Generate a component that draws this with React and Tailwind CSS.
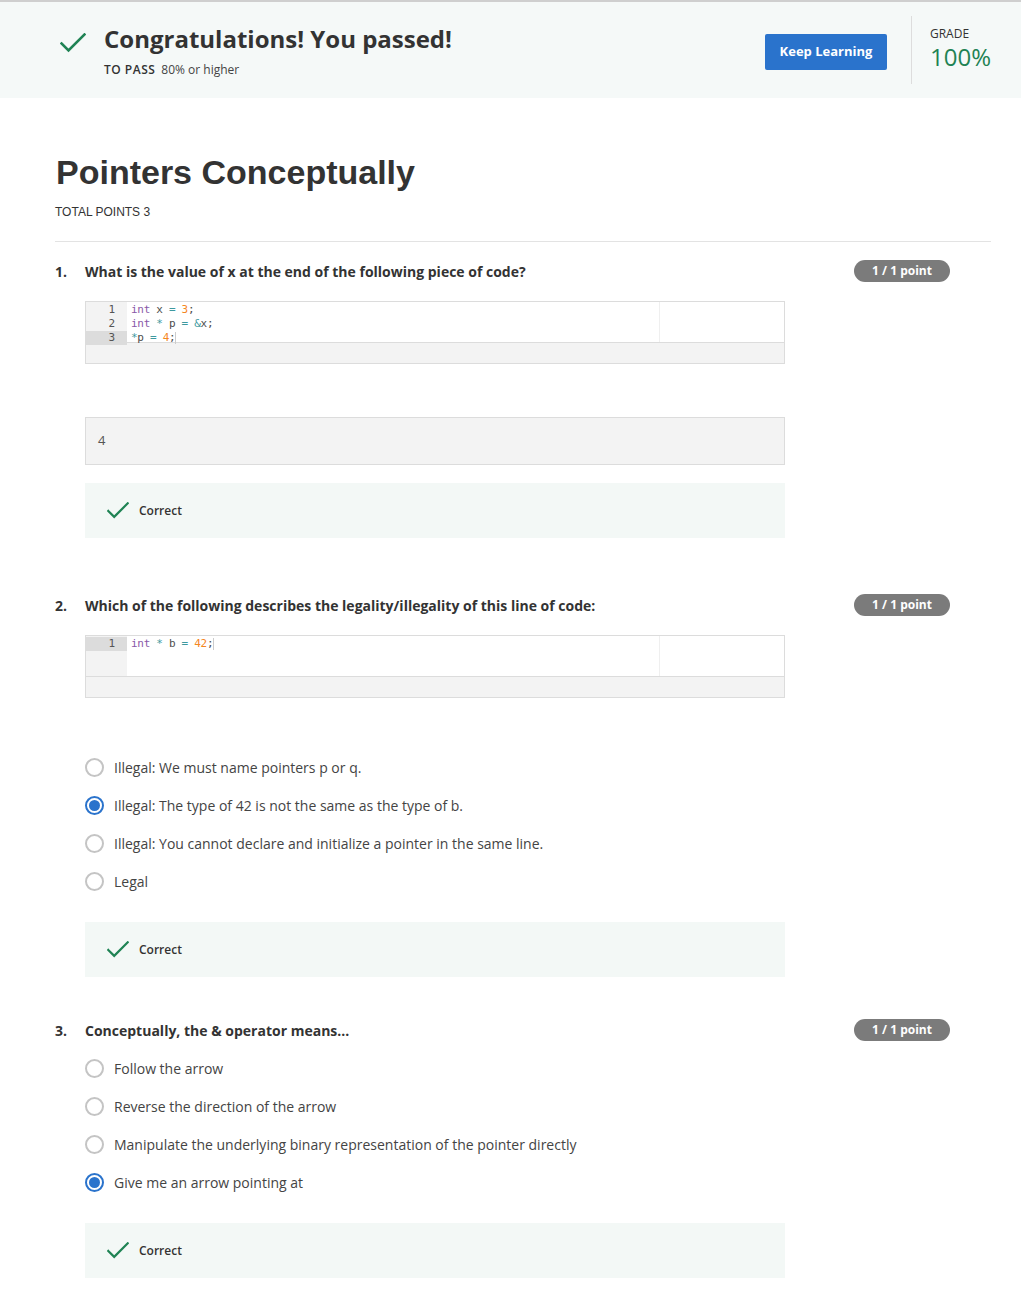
import React from "react";

const Check = ({ className }) => (
  <svg viewBox="0 0 26 20" className={className} fill="none">
    <path d="M1.5 10.5 L8.5 17.5 L24.5 1.5" stroke="#1f8354" strokeWidth="2.6" strokeLinecap="square" />
  </svg>
);

const Badge = () => (
  <div className="w-[96px] h-[22px] rounded-full bg-[#7b7b7b] text-white text-[12px] font-bold flex items-center justify-center" style={{ fontFamily: "'Open Sans', sans-serif" }}>
    1 / 1 point
  </div>
);

const Correct = () => (
  <div className="ml-[30px] w-[700px] h-[55px] bg-[#f3f8f6] flex items-center pl-[22px]">
    <Check className="w-[22px] h-[17px]" />
    <span className="ml-[10px] text-[12px] font-semibold text-[#333]">Correct</span>
  </div>
);

const Radio = ({ checked }) =>
  checked ? (
    <span className="w-[19px] h-[19px] rounded-full border-2 border-[#2a73cc] flex items-center justify-center shrink-0">
      <span className="w-[11px] h-[11px] rounded-full bg-[#2a73cc]" />
    </span>
  ) : (
    <span className="w-[19px] h-[19px] rounded-full border-2 border-[#c4c4c4] shrink-0" />
  );

const Options = ({ items, selected }) => (
  <div className="ml-[30px] flex flex-col gap-[19px]">
    {items.map((t, i) => (
      <div key={i} className="flex items-center h-[19px]">
        <Radio checked={i === selected} />
        <span className="ml-[10px] text-[14px] text-[#444]">{t}</span>
      </div>
    ))}
  </div>
);

const C = {
  kw: "text-[#8959a8]",
  op: "text-[#3e999f]",
  num: "text-[#f5871f]",
  id: "text-[#4d4d4c]",
};

const CodeBox = ({ lines, activeLine }) => (
  <div className="ml-[30px] w-[700px] border border-[#dcdcdc] bg-[#f3f3f3]">
    <div className="h-[41px] bg-white flex border-b border-[#dcdcdc] relative" style={{ fontFamily: "'DejaVu Sans Mono', monospace" }}>
      <div className="w-[41px] bg-[#f3f3f3] flex flex-col pt-[1px]">
        {lines.map((_, i) => (
          <div key={i} className={`h-[14px] leading-[14px] text-[11px] text-right pr-[12px] text-[#555] ${i + 1 === activeLine ? "bg-[#dcdcdc]" : ""}`}>
            {i + 1}
          </div>
        ))}
      </div>
      <div className="flex-1 flex flex-col pt-[1px] pl-[4px] text-[11px] tracking-[-0.3px]">
        {lines.map((l, i) => (
          <div key={i} className="h-[14px] leading-[14px] whitespace-pre">
            {l.map(([cls, txt], j) => (
              <span key={j} className={C[cls]}>{txt}</span>
            ))}
            {i + 1 === activeLine ? <span className="inline-block w-[1px] h-[12px] bg-[#ccc] align-middle" /> : null}
          </div>
        ))}
      </div>
      <div className="absolute left-[573px] top-0 bottom-0 w-px bg-[#efefef]" />
    </div>
    <div className="h-[20px]" />
  </div>
);

const Question = ({ n, text }) => (
  <div className="flex items-center justify-between h-[22px]">
    <div className="flex items-center text-[14px] font-bold text-[#333]">
      <span className="w-[30px]">{n}.</span>
      <span>{text}</span>
    </div>
    <div className="mr-[16px]">
      <Badge />
    </div>
  </div>
);

export default function App() {
  return (
    <div className="w-[1021px] min-h-[1289px] bg-white text-[#333]" style={{ fontFamily: "'Open Sans', sans-serif" }}>
      <div className="border-t-2 border-[#cfcfcf] bg-[#f5f9f8] h-[98px] flex items-start">
        <div className="ml-[60px] mt-[31px]">
          <Check className="w-[26px] h-[20px]" />
        </div>
        <div className="ml-[18px] mt-[20px] flex flex-col">
          <div className="text-[24px] font-bold leading-[34px] text-[#333]">Congratulations! You passed!</div>
          <div className="mt-[5px] flex items-baseline text-[12px]">
            <span className="font-semibold tracking-[0.5px]">TO PASS</span>
            <span className="ml-[6px] text-[#444]">80% or higher</span>
          </div>
        </div>
        <div className="flex-1" />
        <div className="mt-[32px] w-[122px] h-[36px] rounded-[2px] bg-[#2a73cc] text-white text-[13px] font-bold flex items-center justify-center">
          Keep Learning
        </div>
        <div className="ml-[24px] mt-[14px] w-px h-[68px] bg-[#dddddd]" />
        <div className="ml-[18px] mr-[30px] mt-[23px] flex flex-col">
          <span className="text-[12px] leading-[18px] text-[#333]">GRADE</span>
          <span className="text-[24px] leading-[28px] text-[#1f8354]">100%</span>
        </div>
      </div>

      <div className="px-[55px]">
        <h1 className="mt-[54px] text-[34px] font-bold leading-[40px] text-[#333] ml-[1px]" style={{ fontFamily: "'Liberation Sans', Arial, sans-serif" }}>
          Pointers Conceptually
        </h1>
        <div className="mt-[12px] text-[12px] leading-[16px] text-[#333]" style={{ fontFamily: "'Liberation Sans', Arial, sans-serif" }}>TOTAL POINTS 3</div>
        <div className="mt-[21px] mr-[-25px] h-px bg-[#e3e3e3]" />

        <div className="mt-[18px]">
          <Question n={1} text="What is the value of x at the end of the following piece of code?" />
        </div>
        <div className="mt-[19px]">
          <CodeBox
            activeLine={3}
            lines={[
              [["kw", "int"], ["id", " x "], ["op", "="], ["id", " "], ["num", "3"], ["id", ";"]],
              [["kw", "int"], ["id", " "], ["op", "*"], ["id", " p "], ["op", "="], ["id", " "], ["op", "&"], ["id", "x;"]],
              [["op", "*"], ["id", "p "], ["op", "="], ["id", " "], ["num", "4"], ["id", ";"]],
            ]}
          />
        </div>
        <div className="mt-[53px] ml-[30px] w-[700px] h-[48px] bg-[#f3f3f3] border border-[#dcdcdc] flex items-center pl-[12px] text-[13px] text-[#555]">
          4
        </div>
        <div className="mt-[18px]">
          <Correct />
        </div>

        <div className="mt-[56px]">
          <Question n={2} text="Which of the following describes the legality/illegality of this line of code:" />
        </div>
        <div className="mt-[19px]">
          <CodeBox
            activeLine={1}
            lines={[
              [["kw", "int"], ["id", " "], ["op", "*"], ["id", " b "], ["op", "="], ["id", " "], ["num", "42"], ["id", ";"]],
            ]}
          />
        </div>
        <div className="mt-[60px]">
          <Options
            selected={1}
            items={[
              "Illegal: We must name pointers p or q.",
              "Illegal: The type of 42 is not the same as the type of b.",
              "Illegal: You cannot declare and initialize a pointer in the same line.",
              "Legal",
            ]}
          />
        </div>
        <div className="mt-[31px]">
          <Correct />
        </div>

        <div className="mt-[42px]">
          <Question n={3} text="Conceptually, the & operator means..." />
        </div>
        <div className="mt-[18px]">
          <Options
            selected={3}
            items={[
              "Follow the arrow",
              "Reverse the direction of the arrow",
              "Manipulate the underlying binary representation of the pointer directly",
              "Give me an arrow pointing at",
            ]}
          />
        </div>
        <div className="mt-[31px]">
          <Correct />
        </div>
      </div>
    </div>
  );
}
